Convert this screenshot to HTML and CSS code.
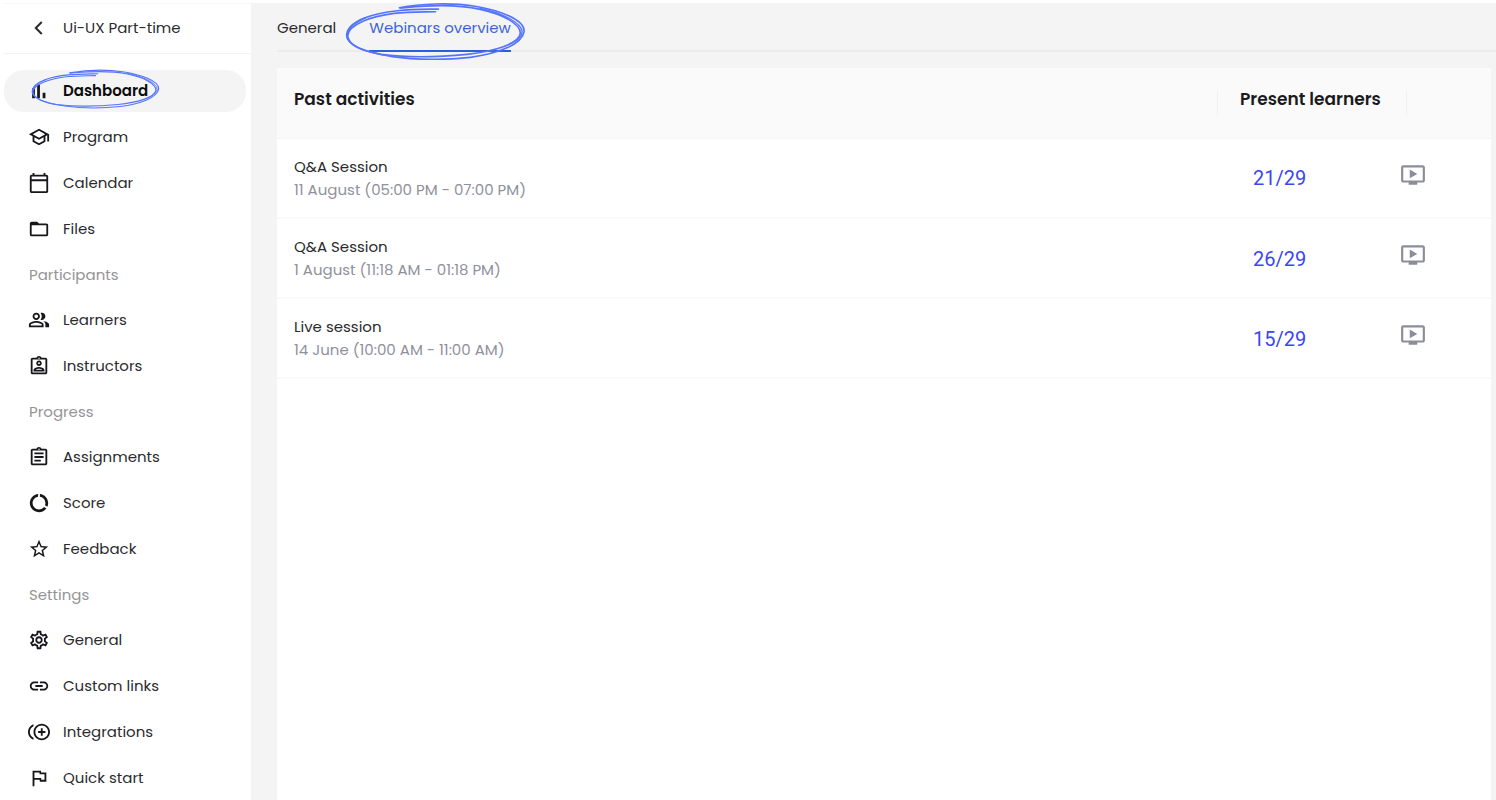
FILE: index.html
```html
<!DOCTYPE html>
<html lang="en">
<head>
<meta charset="utf-8">
<title>Webinars overview</title>
<link rel="stylesheet" href="styles.css">
</head>
<body>
<svg class="defs" aria-hidden="true">
  <symbol id="scribble" viewBox="12 5 546 176" preserveAspectRatio="none">
    <g fill="none" stroke="#5475fa" stroke-linecap="round">
      <path stroke-width="5" d="M176 22C240 10 330 6 400 17C480 30 556 58 552 94C546 132 470 160 390 170C320 178 225 178 155 168C90 158 16 140 17 103C20 60 100 38 170 31C215 27 250 27 294 26"/>
      <path stroke-width="5" d="M178 23C240 18 330 8 420 27C490 42 540 70 541 98C538 130 460 153 380 161C290 170 190 170 120 161C60 150 24 135 20 106C22 72 90 48 160 39C205 34 245 35 285 34"/>
      <path stroke-width="4" d="M420 24C490 38 543 68 546 92C548 108 530 122 505 132M19 112C17 84 40 66 75 52"/>
    </g>
  </symbol>
  <symbol id="play" viewBox="0 0 24 24"><path d="M21 3H3c-1.11 0-2 .89-2 2v12c0 1.1.89 2 2 2h5v2h8v-2h5c1.1 0 2-.9 2-2V5c0-1.11-.9-2-2-2zm0 14H3V5h18v12zm-5-6l-7 4V7z"/></symbol>
</svg>
<div class="app">
  <aside class="sidebar">
    <button class="back" type="button">
      <svg class="icon" viewBox="0 0 24 24"><path d="M15 5.5L8.5 12L15 18.5" fill="none" stroke="currentColor" stroke-width="2.2"/></svg>
      <span>Ui-UX Part-time</span>
    </button>
    <nav class="nav">
      <a class="item active" href="#">
        <svg class="icon" viewBox="0 0 24 24"><path d="M4.5 9h3v11h-3zM10 5h3v15h-3zM16 14h3v6h-3z"/></svg>
        <span>Dashboard</span>
        <svg class="mark mark-nav" aria-hidden="true"><use href="#scribble"/></svg>
      </a>
      <a class="item" href="#"><svg class="icon" viewBox="0 0 24 24"><path d="M12 3L1 9l4 2.18v6L12 21l7-3.82v-6l2-1.09V17h2V9L12 3zm6.82 6L12 12.72 5.18 9 12 5.28 18.82 9zM17 15.99l-5 2.73-5-2.73v-3.72L12 15l5-2.73v3.72z"/></svg><span>Program</span></a>
      <a class="item" href="#"><svg class="icon" viewBox="0 0 24 24"><path d="M20 3h-1V1h-2v2H7V1H5v2H4c-1.1 0-2 .9-2 2v16c0 1.1.9 2 2 2h16c1.1 0 2-.9 2-2V5c0-1.1-.9-2-2-2zm0 18H4V10h16v11zm0-13H4V5h16v3z"/></svg><span>Calendar</span></a>
      <a class="item" href="#"><svg class="icon" viewBox="0 0 24 24"><path d="M20 6h-8l-2-2H4c-1.1 0-2 .9-2 2v12c0 1.1.9 2 2 2h16c1.1 0 2-.9 2-2V8c0-1.1-.9-2-2-2zm0 12H4V8h16v10z"/></svg><span>Files</span></a>
      <h2 class="group">Participants</h2>
      <a class="item" href="#"><svg class="icon" viewBox="0 0 24 24"><path d="M16.67 13.13C18.04 14.06 19 15.32 19 17v3h4v-3c0-2.18-3.57-3.47-6.33-3.87zM15 12c2.21 0 4-1.79 4-4s-1.79-4-4-4c-.47 0-.91.1-1.33.24C14.5 5.27 15 6.58 15 8s-.5 2.73-1.33 3.76c.42.14.86.24 1.33.24zM9 12c2.21 0 4-1.79 4-4s-1.79-4-4-4-4 1.79-4 4 1.79 4 4 4zm0-6c1.1 0 2 .9 2 2s-.9 2-2 2-2-.9-2-2 .9-2 2-2zM9 13c-2.67 0-8 1.34-8 4v3h16v-3c0-2.66-5.33-4-8-4zm6 5H3v-.99C3.2 16.29 6.3 15 9 15s5.8 1.29 6 2v1z"/></svg><span>Learners</span></a>
      <a class="item" href="#"><svg class="icon" viewBox="0 0 24 24"><path d="M19 3h-4.18C14.4 1.84 13.3 1 12 1s-2.4.84-2.82 2H5c-1.1 0-2 .9-2 2v14c0 1.1.9 2 2 2h14c1.1 0 2-.9 2-2V5c0-1.1-.9-2-2-2zm-7-.25c.41 0 .75.34.75.75s-.34.75-.75.75-.75-.34-.75-.75.34-.75.75-.75zM19 19H5V5h14v14zM12 12c1.65 0 3-1.35 3-3s-1.35-3-3-3-3 1.35-3 3 1.35 3 3 3zm0-4c.55 0 1 .45 1 1s-.45 1-1 1-1-.45-1-1 .45-1 1-1zm6 8.58c0-2.5-3.97-3.58-6-3.58s-6 1.08-6 3.58V18h12v-1.42zM8.48 16c.74-.51 2.23-1 3.52-1 1.3 0 2.78.49 3.52 1H8.48z"/></svg><span>Instructors</span></a>
      <h2 class="group">Progress</h2>
      <a class="item" href="#"><svg class="icon" viewBox="0 0 24 24"><path d="M7 15h7v2H7zm0-4h10v2H7zm0-4h10v2H7zm12-4h-4.18C14.4 1.84 13.3 1 12 1s-2.4.84-2.82 2H5c-1.1 0-2 .9-2 2v14c0 1.1.9 2 2 2h14c1.1 0 2-.9 2-2V5c0-1.1-.9-2-2-2zm-7-.25c.41 0 .75.34.75.75s-.34.75-.75.75-.75-.34-.75-.75.34-.75.75-.75zM19 19H5V5h14v14z"/></svg><span>Assignments</span></a>
      <a class="item" href="#"><svg class="icon" viewBox="0 0 24 24"><path d="M13 2.05v3.03c3.39.49 6 3.39 6 6.92 0 .9-.18 1.75-.48 2.54l2.6 1.53c.56-1.24.88-2.62.88-4.07 0-5.18-3.95-9.45-9-9.95zM12 19c-3.87 0-7-3.13-7-7 0-3.53 2.61-6.43 6-6.92V2.05c-5.06.5-9 4.76-9 9.95 0 5.52 4.47 10 9.99 10 3.31 0 6.24-1.61 8.06-4.09l-2.6-1.53C16.17 17.98 14.21 19 12 19z"/></svg><span>Score</span></a>
      <a class="item" href="#"><svg class="icon" viewBox="0 0 24 24"><path d="M22 9.24l-7.19-.62L12 2 9.19 8.63 2 9.24l5.46 4.73L5.82 21 12 17.27 18.18 21l-1.63-7.03L22 9.24zM12 15.4l-3.76 2.27 1-4.28-3.32-2.88 4.38-.38L12 6.1l1.71 4.04 4.38.38-3.32 2.88 1 4.28L12 15.4z"/></svg><span>Feedback</span></a>
      <h2 class="group">Settings</h2>
      <a class="item" href="#"><svg class="icon" viewBox="0 0 24 24"><path d="M19.43 12.98c.04-.32.07-.64.07-.98 0-.34-.03-.66-.07-.98l2.11-1.65c.19-.15.24-.42.12-.64l-2-3.46c-.09-.16-.26-.25-.44-.25-.06 0-.12.01-.17.03l-2.49 1c-.52-.4-1.08-.73-1.69-.98l-.38-2.65C14.46 2.18 14.25 2 14 2h-4c-.25 0-.46.18-.49.42l-.38 2.65c-.61.25-1.17.59-1.69.98l-2.49-1c-.06-.02-.12-.03-.18-.03-.17 0-.34.09-.43.25l-2 3.46c-.13.22-.07.49.12.64l2.11 1.65c-.04.32-.07.65-.07.98 0 .33.03.66.07.98l-2.11 1.65c-.19.15-.24.42-.12.64l2 3.46c.09.16.26.25.44.25.06 0 .12-.01.17-.03l2.49-1c.52.4 1.08.73 1.69.98l.38 2.65c.03.24.24.42.49.42h4c.25 0 .46-.18.49-.42l.38-2.65c.61-.25 1.17-.59 1.69-.98l2.49 1c.06.02.12.03.18.03.17 0 .34-.09.43-.25l2-3.46c.12-.22.07-.49-.12-.64l-2.11-1.65zm-1.98-1.71c.04.31.05.52.05.73 0 .21-.02.43-.05.73l-.14 1.13.89.7 1.08.84-.7 1.21-1.27-.51-1.04-.42-.9.68c-.43.32-.84.56-1.25.73l-1.06.43-.16 1.13-.2 1.35h-1.4l-.19-1.35-.16-1.13-1.06-.43c-.43-.18-.83-.41-1.23-.71l-.91-.7-1.06.43-1.27.51-.7-1.21 1.08-.84.89-.7-.14-1.13c-.03-.31-.05-.54-.05-.74s.02-.43.05-.73l.14-1.13-.89-.7-1.08-.84.7-1.21 1.27.51 1.04.42.9-.68c.43-.32.84-.56 1.25-.73l1.06-.43.16-1.13.2-1.35h1.39l.19 1.35.16 1.13 1.06.43c.43.18.83.41 1.23.71l.91.7 1.06-.43 1.27-.51.7 1.21-1.07.85-.89.7.14 1.13zM12 8c-2.21 0-4 1.79-4 4s1.79 4 4 4 4-1.79 4-4-1.79-4-4-4zm0 6c-1.1 0-2-.9-2-2s.9-2 2-2 2 .9 2 2-.9 2-2 2z"/></svg><span>General</span></a>
      <a class="item" href="#"><svg class="icon" viewBox="0 0 24 24"><path d="M3.9 12c0-1.71 1.39-3.1 3.1-3.1h4V7H7c-2.76 0-5 2.24-5 5s2.24 5 5 5h4v-1.9H7c-1.71 0-3.1-1.39-3.1-3.1zM8 13h8v-2H8v2zm9-6h-4v1.9h4c1.71 0 3.1 1.39 3.1 3.1s-1.39 3.1-3.1 3.1h-4V17h4c2.76 0 5-2.24 5-5s-2.24-5-5-5z"/></svg><span>Custom links</span></a>
      <a class="item" href="#"><svg class="icon" viewBox="0 0 24 24"><path d="M16 8h-2v3h-3v2h3v3h2v-3h3v-2h-3zM2 12c0-2.79 1.64-5.2 4.01-6.32V3.52C2.52 4.76 0 8.09 0 12s2.52 7.24 6.01 8.48v-2.16C3.64 17.2 2 14.79 2 12zm13-9c-4.96 0-9 4.04-9 9s4.04 9 9 9 9-4.04 9-9-4.04-9-9-9zm0 16c-3.86 0-7-3.14-7-7s3.14-7 7-7 7 3.14 7 7-3.14 7-7 7z"/></svg><span>Integrations</span></a>
      <a class="item" href="#"><svg class="icon" viewBox="0 0 24 24"><path d="M12.36 6l.4 2H18v6h-3.36l-.4-2H7V6h5.36M14 4H5v17h2v-7h5.6l.4 2h7V6h-5.6L14 4z"/></svg><span>Quick start</span></a>
    </nav>
  </aside>
  <main class="main">
    <nav class="tabs">
      <a class="tab" href="#">General</a>
      <a class="tab current" href="#">Webinars overview<svg class="mark mark-tab" aria-hidden="true"><use href="#scribble"/></svg></a>
    </nav>
    <section class="card">
      <table class="table">
        <thead>
          <tr><th scope="col">Past activities</th><th class="present" scope="col"><span class="divided">Present learners</span></th><td class="action"></td></tr>
        </thead>
        <tbody>
          <tr>
            <td><div class="title">Q&amp;A Session</div><div class="when">11 August (05:00 PM - 07:00 PM)</div></td>
            <td class="count">21/29</td>
            <td class="action"><button class="play" type="button" aria-label="Play recording"><svg><use href="#play"/></svg></button></td>
          </tr>
          <tr>
            <td><div class="title">Q&amp;A Session</div><div class="when">1 August (11:18 AM - 01:18 PM)</div></td>
            <td class="count">26/29</td>
            <td class="action"><button class="play" type="button" aria-label="Play recording"><svg><use href="#play"/></svg></button></td>
          </tr>
          <tr>
            <td><div class="title">Live session</div><div class="when">14 June (10:00 AM - 11:00 AM)</div></td>
            <td class="count">15/29</td>
            <td class="action"><button class="play" type="button" aria-label="Play recording"><svg><use href="#play"/></svg></button></td>
          </tr>
        </tbody>
      </table>
    </section>
  </main>
</div>
</body>
</html>
```

FILE: styles.css
```css
* { box-sizing: border-box; }

body {
  margin: 0;
  background: #fff;
  color: #2b2b2e;
  font-family: Poppins, Inter, sans-serif;
  font-size: 15px;
  line-height: 22px;
}

a { color: inherit; text-decoration: none; }

button {
  border: 0;
  padding: 0;
  background: none;
  color: inherit;
  font: inherit;
  cursor: pointer;
}

.defs { position: absolute; width: 0; height: 0; }

.app {
  display: flex;
  height: 100vh;
  padding: 3px 0 0 4px;
  overflow: hidden;
}

.sidebar { flex: 0 0 247px; }

.back {
  display: flex;
  align-items: center;
  gap: 13px;
  width: 100%;
  height: 51px;
  padding: 0 0 2px 24px;
  border-top: 1px solid #f7f7f7;
  border-bottom: 1px solid #f3f3f3;
}

.nav { padding: 14px 5px 0 0; }

.item {
  position: relative;
  display: flex;
  align-items: center;
  gap: 13px;
  height: 46px;
  padding-left: 24px;
}

.active {
  height: 42px;
  margin: 2px 0;
  border-radius: 20px;
  background: #f4f4f4;
  color: #0c0c0e;
  font-family: "Poppins SemiBold", Poppins, Inter, sans-serif;
  font-weight: 700;
}

.icon {
  flex: none;
  width: 22px;
  height: 22px;
  fill: #17171a;
}

.group {
  margin: 0;
  padding-left: 25px;
  color: #949496;
  font-size: 15px;
  font-weight: 400;
  line-height: 45px;
}

.mark {
  position: absolute;
  pointer-events: none;
}

.mark use { width: 100%; height: 100%; }

.mark-nav { left: 27px; top: -1px; width: 129px; height: 40px; }
.mark-tab { left: -24px; top: -1px; width: 181px; height: 59px; }

.main {
  flex: 1;
  display: flex;
  flex-direction: column;
  gap: 16px;
  min-width: 0;
  padding-left: 26px;
  background: #f4f4f4;
}

.tabs {
  display: flex;
  gap: 33px;
  height: 49px;
  border-bottom: 2px solid #ebebeb;
}

.tab {
  position: relative;
  height: 49px;
  line-height: 49px;
}

.current {
  border-bottom: 2px solid #2f5fd8;
  color: #3c64d8;
}

.card {
  flex: 1;
  margin-right: 5px;
  background: #fff;
}

.table {
  width: 100%;
  border-collapse: collapse;
}

.table tr { border-bottom: 2px solid #fafafa; }
.table th, .table td { padding: 0; text-align: left; }

.table thead { background: #fafafa; }
.table thead tr { height: 70px; border-bottom: 1px solid #f5f5f5; }

.table th {
  padding: 0 0 8px 17px;
  color: #1b1b1d;
  font-family: "Poppins SemiBold", Poppins, Inter, sans-serif;
  font-size: 17px;
  font-weight: 700;
}

.table .present {
  width: 190px;
  padding: 0;
  white-space: nowrap;
}

.divided {
  display: block;
  height: 24px;
  padding-left: 22px;
  border: solid #f0f0f0;
  border-width: 0 1px;
  line-height: 16px;
}

.table tbody tr { height: 80px; }
.table tbody td:first-child { padding: 0 0 0 17px; }

.title, .when { line-height: 23px; }
.when { color: #8f919c; }

.table .count {
  padding: 1px 0 0 36px;
  color: #3a46f2;
  font-family: Roboto, sans-serif;
  font-size: 20px;
}

.table .action {
  width: 84px;
  padding-bottom: 6px;
}

.play {
  display: block;
  width: 26px;
  height: 26px;
  margin-left: -7px;
}

.play svg {
  display: block;
  width: 26px;
  height: 26px;
  fill: #8b8d9b;
}
```
